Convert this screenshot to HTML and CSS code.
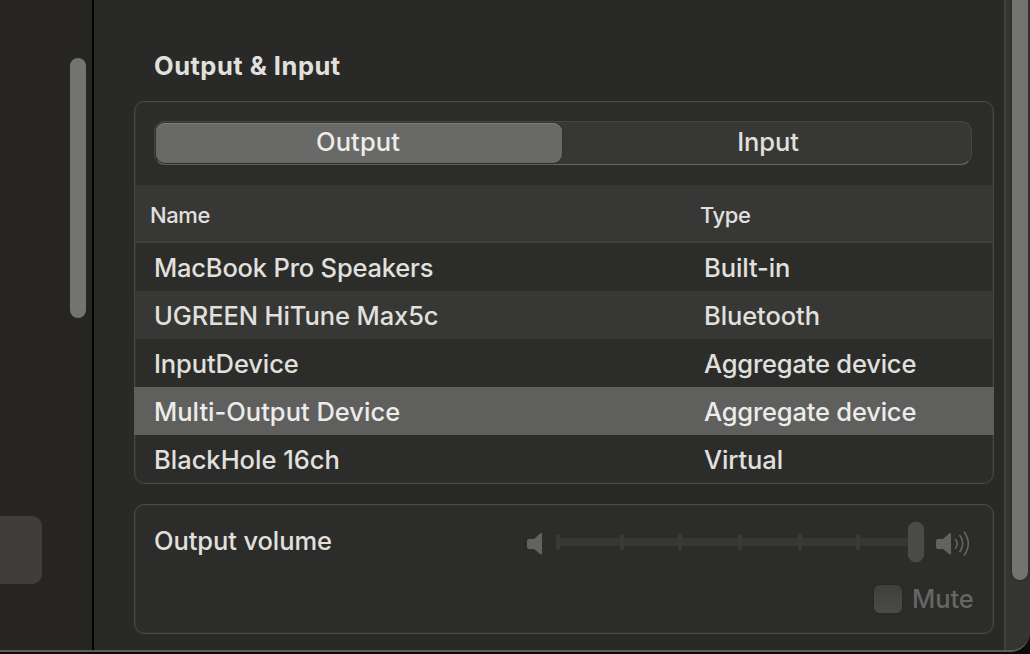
FILE: index.html
```html
<!DOCTYPE html>
<html lang="en">
<head>
<meta charset="utf-8">
<title>Sound</title>
<link rel="stylesheet" href="styles.css">
</head>
<body>
<div class="window">
  <aside class="sidebar">
    <div class="sidebar-thumb"></div>
    <div class="sidebar-item"></div>
  </aside>
  <main class="content">
    <h2 class="title"><span>Output &amp; Input</span></h2>
    <section class="card devices">
      <div class="segmented">
        <div class="segment selected"><span>Output</span></div>
        <div class="segment"><span>Input</span></div>
      </div>
      <div class="row header"><span>Name</span><span>Type</span></div>
      <div class="row"><span class="long">MacBook Pro Speakers</span><span>Built-in</span></div>
      <div class="row alt"><span>UGREEN HiTune Max5c</span><span>Bluetooth</span></div>
      <div class="row"><span>InputDevice</span><span class="long">Aggregate device</span></div>
      <div class="row active"><span class="wide">Multi-Output Device</span><span class="long">Aggregate device</span></div>
      <div class="row"><span class="wide">BlackHole 16ch</span><span>Virtual</span></div>
    </section>
    <section class="card volume">
      <div class="volume-row">
        <span class="volume-label">Output volume</span>
        <svg class="speaker" width="17" height="24" viewBox="0 0 17 24"><path d="M2 7H7L13.200 1.500Q15 .2 15 2V21.500Q15 23.300 13.200 22L7 17H2Q0 17 0 15V9Q0 7 2 7Z"/></svg>
        <div class="slider">
          <div class="track"></div>
          <i class="tick"></i><i class="tick"></i><i class="tick"></i><i class="tick"></i><i class="tick"></i><i class="tick"></i>
          <div class="knob"></div>
        </div>
        <svg class="speaker-loud" width="36" height="26" viewBox="0 0 36 26"><path d="M2 8H7L13.200 2.500Q15 1.200 15 3V22.500Q15 24.300 13.200 23L7 18H2Q0 18 0 16V10Q0 8 2 8Z"/><path class="wave" d="M19.500 8.300Q23 12.500 19.500 17.200M23.900 4.600Q29.600 12.500 23.900 20.700M28.400 1.200Q36.200 12.500 28.400 24"/></svg>
      </div>
      <div class="mute"><i class="checkbox"></i><span>Mute</span></div>
    </section>
  </main>
  <div class="gutter"><div class="gutter-thumb"></div></div>
</div>
</body>
</html>
```
FILE: styles.css
```css
* { box-sizing: border-box; }
body {
  margin: 0;
  height: 654px;
  overflow: hidden;
  background: #0c0c0c;
  color: #e0e0df;
  font: 500 25.5px/48px Inter, "Liberation Sans", sans-serif;
  letter-spacing: -0.1px;
  white-space: nowrap;
}
.window {
  display: flex;
  width: 1030px;
  height: 652px;
  background: #292927;
  border-bottom: 2px solid #5c5c5b;
  border-bottom-right-radius: 20px;
  overflow: hidden;
}
.sidebar {
  width: 94px;
  flex: none;
  border-right: 2px solid #000;
  background: #262523;
  padding-top: 58px;
}
.sidebar-thumb {
  width: 16px;
  height: 260px;
  margin-left: 70px;
  border-radius: 8px;
  background: #737371;
}
.sidebar-item {
  width: 42px;
  height: 68px;
  margin-top: 198px;
  border-radius: 0 10px 10px 0;
  background: #3f3e3c;
}
.content {
  width: 910px;
  flex: none;
  padding: 42px 10px 0 40px;
}
.title {
  margin: 0 0 11px 20px;
  font-size: 25.5px;
  line-height: 48px;
  font-weight: 700;
  letter-spacing: 0.5px;
}
.card {
  border: 1px solid #494947;
  border-radius: 10px;
  background: #2c2c2a;
  box-shadow: inset 0 0 0 1px #343432;
}
.devices { height: 383px; }
.segmented {
  display: flex;
  height: 44px;
  margin: 19px 21px 20px 19px;
  padding: 1px;
  border: 1px solid #454543;
  border-bottom-color: #6a6a68;
  border-radius: 11px;
  background: #373735;
  line-height: 38px;
  text-align: center;
}
.segment { flex: 1; height: 40px; padding-left: 4px; border-radius: 9px; }
.segment.selected {
  flex: 0 0 406px;
  padding: 0 2px 0 0;
  background: #696968;
  box-shadow: inset 0 1px #7d7d7b, 0 1px 2px #2228;
  color: #ececeb;
  letter-spacing: 0.1px;
}
.row {
  display: grid;
  grid-template-columns: 550px 1fr;
  height: 48px;
  padding-left: 19px;
  line-height: 49px;
}
.long { letter-spacing: -0.2px; }
.wide { letter-spacing: 0; }
.header {
  height: 58px;
  padding-left: 15px;
  border-bottom: 2px solid #40403e;
  background: #373735;
  font-size: 22px;
  line-height: 60px;
  letter-spacing: -0.4px;
}
.alt { background: #373735; }
.active { background: #5f5f5e; margin: 0 -1px; padding-left: 20px; color: #ececeb; }
.volume { height: 130px; margin-top: 20px; }
.volume-row { display: flex; height: 72px; padding-left: 19px; }
.volume-label { width: 373px; line-height: 71px; }
.speaker, .speaker-loud { fill: #62625f; flex: none; }
.speaker { margin: 27px 12px 0 0; }
.wave { fill: none; stroke: #62625f; stroke-width: 1.700; stroke-linecap: round; }
.slider { position: relative; width: 368px; height: 40px; margin-top: 17px; }
.track { height: 8px; margin-top: 16px; border-radius: 3px; background: #363634; }
.tick {
  position: absolute;
  top: 12px;
  width: 4px;
  height: 16px;
  border-radius: 2px;
  background: #393937;
}
.tick:nth-of-type(1) { left: 0; }
.tick:nth-of-type(2) { left: 64px; }
.tick:nth-of-type(3) { left: 122px; }
.tick:nth-of-type(4) { left: 182px; }
.tick:nth-of-type(5) { left: 242px; }
.tick:nth-of-type(6) { left: 300px; }
.knob {
  position: absolute;
  top: 0;
  right: 0;
  width: 16px;
  height: 40px;
  border-radius: 8px;
  background: #4a4a48;
  box-shadow: 0 0 1px #555;
}
.speaker-loud { margin: 26px 0 0 12px; }
.mute {
  display: flex;
  align-items: center;
  gap: 10px;
  height: 44px;
  margin-left: 739px;
  color: #666664;
}
.checkbox {
  width: 28px;
  height: 28px;
  border-radius: 6px;
  background: linear-gradient(#3f3f3d, #4a4a48);
  box-shadow: 0 0 2px #222;
}
.gutter {
  flex: 1;
  padding-left: 6px;
  border-left: 2px solid #40403e;
  background: #343432;
}
.gutter-thumb {
  width: 16px;
  height: 580px;
  border-radius: 0 0 8px 8px;
  background: #737371;
  box-shadow: 0 0 1px 1px #2c2c2a;
}
```
